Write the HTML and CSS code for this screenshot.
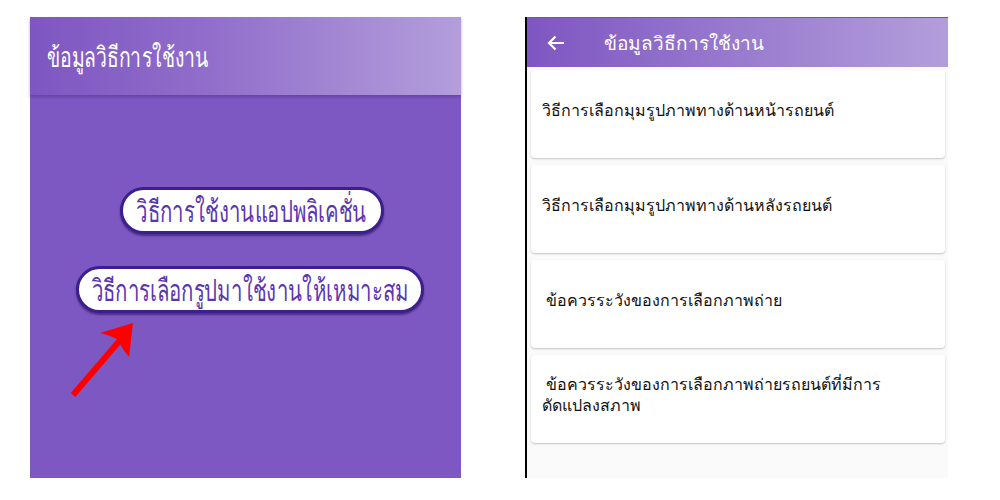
FILE: index.html
```html
<!DOCTYPE html>
<html lang="th">
<head>
<meta charset="utf-8">
<link rel="stylesheet" href="styles.css">
</head>
<body>
<div class="page">
  <section class="phone-left">
    <header class="bar-left"><span class="narrow">ข้อมูลวิธีการใช้งาน</span></header>
    <div class="menu">
      <div class="pill pill-one"><span class="narrow">วิธีการใช้งานแอปพลิเคชั่น</span></div>
      <div class="pill pill-two"><span class="narrow">วิธีการเลือกรูปมาใช้งานให้เหมาะสม</span></div>
    </div>
    <svg class="pointer" width="80" height="90" viewBox="0 0 80 90">
      <line x1="3" y1="76" x2="52" y2="19" stroke="#ff0000" stroke-width="6"/>
      <path d="M63 4 L30 14 Q46 18 49 22 Q52 30 59 38 Z" fill="#ff0000"/>
    </svg>
  </section>
  <section class="phone-right">
    <header class="bar-right">
      <svg class="back" width="20" height="20" viewBox="0 0 20 20">
        <path d="M18 10 H3 M9.5 3.5 L3 10 L9.5 16.5" fill="none" stroke="#fff" stroke-width="2.2"/>
      </svg>
      <span class="bar-title">ข้อมูลวิธีการใช้งาน</span>
    </header>
    <div class="list">
      <div class="card"><p>วิธีการเลือกมุมรูปภาพทางด้านหน้ารถยนต์</p></div>
      <div class="card"><p>วิธีการเลือกมุมรูปภาพทางด้านหลังรถยนต์</p></div>
      <div class="card"><p>&nbsp;ข้อควรระวังของการเลือกภาพถ่าย</p></div>
      <div class="card"><p>&nbsp;ข้อควรระวังของการเลือกภาพถ่ายรถยนต์ที่มีการ<br>ดัดแปลงสภาพ</p></div>
    </div>
  </section>
</div>
</body>
</html>
```
FILE: styles.css
```css
html, body {
  margin: 0;
  padding: 0;
  background: #ffffff;
}
body {
  font-family: "Noto Sans", "DejaVu Sans", sans-serif;
}
.page {
  display: flex;
  gap: 64px;
  padding: 17px 0 0 30px;
}
.narrow {
  display: inline-block;
  white-space: nowrap;
  flex: none;
}
.phone-left {
  position: relative;
  width: 431px;
  height: 461px;
  background: #7e58c2;
}
.bar-left {
  height: 78px;
  background: linear-gradient(90deg, #7e56c1 0%, #906dca 40%, #b39edb 100%);
  color: #ffffff;
  font-size: 28px;
  line-height: 78px;
  padding-left: 17px;
  box-shadow: 0 2px 3px rgba(60, 30, 110, 0.35);
}
.bar-left .narrow {
  transform: scaleX(0.69);
  transform-origin: left center;
}
.menu {
  display: flex;
  flex-direction: column;
  align-items: center;
  gap: 32px;
  padding-top: 92px;
}
.pill {
  box-sizing: border-box;
  display: flex;
  justify-content: center;
  align-items: center;
  height: 47px;
  border: 3px solid #3b1f8e;
  border-radius: 24px;
  background: #ffffff;
  color: #5c36b0;
  font-size: 30px;
  font-weight: 500;
  line-height: 41px;
  box-shadow: 0 2px 2px rgba(40, 20, 90, 0.6);
}
.pill .narrow {
  transform: scaleX(0.68);
  transform-origin: center center;
}
.pill-one {
  width: 264px;
  margin-left: 12px;
}
.pill-two {
  width: 348px;
  margin-left: 9px;
}
.pointer {
  position: absolute;
  left: 40px;
  top: 302px;
}
.phone-right {
  width: 421px;
  height: 461px;
  border-left: 2px solid #000000;
  background: #fafafa;
}
.bar-right {
  display: flex;
  align-items: center;
  height: 50px;
  background: linear-gradient(90deg, #7e56c1 0%, #9677cd 45%, #b39edb 100%);
  border-top: 1px solid #6f5a96;
  box-sizing: border-box;
  padding-left: 19px;
  color: #ffffff;
}
.back {
  flex: none;
}
.bar-title {
  margin-left: 38px;
  font-size: 19px;
}
.list {
  display: flex;
  flex-direction: column;
  gap: 7px;
  padding: 3px 3px 0 4px;
}
.card {
  box-sizing: border-box;
  height: 88px;
  background: #ffffff;
  border-radius: 4px;
  box-shadow: 0 1px 2px rgba(0, 0, 0, 0.22);
  display: flex;
  align-items: center;
  padding: 0 12px 8px 11px;
}
.card p {
  margin: 0;
  color: #111111;
  font-size: 16px;
  font-weight: 500;
  line-height: 21px;
}
```
